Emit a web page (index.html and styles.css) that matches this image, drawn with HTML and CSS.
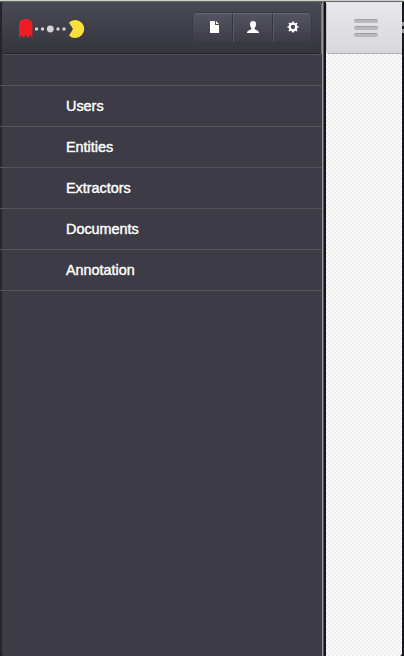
FILE: index.html
```html
<!DOCTYPE html>
<html lang="en">
<head>
<meta charset="utf-8">
<title>Menu</title>
<link rel="stylesheet" href="styles.css">
</head>
<body>
<div class="frame">
  <aside class="sidebar">
    <header class="bar">
      <svg class="logo" width="68" height="22" viewBox="0 0 68 22">
        <path fill="#f01c24" d="M1 20V7Q1 1 7.700 1T14.400 7V20L12 17L10 20L7.700 17L5.500 20L3.400 17Z"/>
        <g fill="#d3d3d5"><circle cx="18.500" cy="11" r="1.700"/><circle cx="24.500" cy="11" r="1.700"/><circle cx="32.300" cy="11" r="3.400"/><circle cx="40" cy="11" r="1.700"/><circle cx="46" cy="11" r="1.700"/></g>
        <path fill="#fae13a" d="M51 4.500A9 9 0 1 1 51 17.500L55 11Z"/>
      </svg>
      <div class="buttons">
        <button class="btn" aria-label="Documents"><svg width="14" height="14" viewBox="0 0 14 14"><path fill="#fff" d="M3 1H8V5H12V13H3ZM9 1L12 4H9Z"/></svg></button>
        <button class="btn" aria-label="User"><svg width="14" height="14" viewBox="0 0 14 14"><path fill="#fff" d="M7 1C9.200 1 10 2.300 10 4.200C10 6 9.300 7 8.700 7.800V9.200C9.500 10 13 10.200 13 13H1C1 10.200 4.500 10 5.300 9.200V7.800C4.700 7 4 6 4 4.200C4 2.300 4.800 1 7 1Z"/></svg></button>
        <button class="btn" aria-label="Settings"><svg width="14" height="14" viewBox="0 0 14 14"><circle cx="7" cy="7" r="3.300" fill="none" stroke="#fff" stroke-width="2.300"/><path stroke="#fff" stroke-width="1.700" d="M7 1.500V3M7 11V12.500M1.500 7H3M11 7H12.500M3 3L4.200 4.200M9.800 9.800L11 11M3 11L4.200 9.800M9.800 4.200L11 3"/></svg></button>
      </div>
    </header>
    <nav class="menu">
      <a>Users</a>
      <a>Entities</a>
      <a>Extractors</a>
      <a>Documents</a>
      <a>Annotation</a>
    </nav>
  </aside>
  <div class="divider"></div>
  <main class="page">
    <header class="pagebar">
      <div class="burger"><i></i><i></i><i></i></div>
    </header>
  </main>
  <div class="edge"><span></span></div>
</div>
</body>
</html>
```
FILE: styles.css
```css
* { box-sizing: border-box; }
body { margin: 0; background: #18181c; font-family: "Liberation Sans", Arial, sans-serif; }
.frame {
  display: flex;
  width: 404px;
  height: 656px;
  overflow: hidden;
  border-top: 1px solid #cdd2ca;
  box-shadow: inset 0 1px #66676a;
  padding-top: 1px;
}
.sidebar {
  width: 322px;
  background: #3d3c46;
  border-left: 2px solid #25242c;
  border-bottom-left-radius: 3px;
}
.bar {
  display: flex;
  align-items: flex-start;
  justify-content: space-between;
  height: 53px;
  padding: 10px 9px 0 16px;
  background: linear-gradient(#4a4a57, #34343c);
  border-right: 1px solid #777681;
  border-bottom: 1px solid #55545f;
  border-radius: 4px 4px 3px 3px;
  box-shadow: inset 0 -1px #202027;
}
.logo { margin-top: 6px; }
.buttons {
  display: flex;
  width: 120px;
  height: 31px;
  border: 1px solid #393943;
  border-radius: 5px;
  overflow: hidden;
}
.btn {
  width: 40px;
  flex: none;
  display: flex;
  align-items: center;
  justify-content: center;
  padding: 0 0 2px;
  border: 0;
  border-top: 1px solid #666675;
  background: linear-gradient(#545362, #3c3c47);
}
.btn:first-child { width: 39px; padding-left: 2px; }
.btn + .btn { border-left: 1px solid #353540; box-shadow: inset 1px 0 #5b5a68; padding-left: 1px; }
.menu { margin-left: -2px; padding-top: 30px; }
.menu a {
  display: block;
  height: 41px;
  padding-left: 66px;
  border-top: 1px solid #555553;
  color: #fff;
  font-size: 14.4px;
  line-height: 40px;
  text-shadow: 0 1px #24242a;
  -webkit-text-stroke: 0.45px #fff;
}
.menu a:last-child { height: 42px; border-bottom: 1px solid #555553; }
.divider {
  width: 4px;
  background: linear-gradient(90deg, #96969a 0 1px, #55555a 1px 2px, #151517 2px);
}
.page {
  width: 76px;
  background: repeating-conic-gradient(#efefef 0 25%, #fafafa 0 50%) 0 0 / 4px 4px;
  border-bottom-right-radius: 3px;
}
.pagebar {
  height: 52px;
  padding: 17px 0 0 27px;
  background: linear-gradient(#e9e8ed, #d8d7dd);
  border-left: 1px solid #c5c4cd;
  border-bottom: 1px solid #aeadb8;
  border-radius: 4px 0 0 4px;
}
.burger { width: 24px; display: grid; gap: 3px; }
.burger i {
  height: 4px;
  border-radius: 2px;
  background: #b9b8be;
  border-top: 1px solid #9f9ea5;
}
.edge { width: 2px; background: #17171e; }
.edge span { display: block; height: 11px; margin-top: 20px; border: solid #999; border-width: 4px 0; }
```
